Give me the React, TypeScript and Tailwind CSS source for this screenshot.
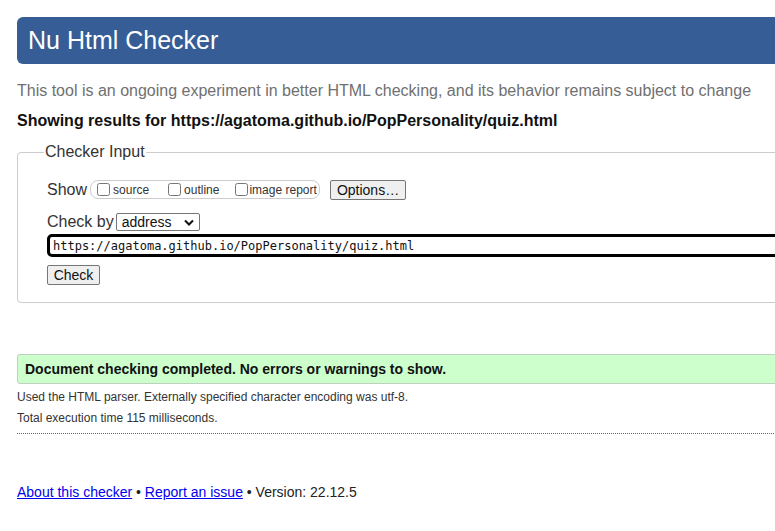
import React from 'react';

export default function App() {
  return (
    <div className="h-[531px] w-[775px] overflow-hidden bg-white font-['Liberation_Sans',Arial,sans-serif] text-[#222]">
      <div className="w-[840px] pl-[17px] pt-[17px]">
        {/* HEADER */}
        <h1 className="h-[47px] bg-[#365d95] rounded-l-[6px] pl-[11px] flex items-center text-white text-[25px] leading-none">
          Nu Html Checker
        </h1>

        <p className="mt-[17px] text-[16px] leading-[20px] text-[#707070] whitespace-nowrap">
          This tool is an ongoing experiment in better HTML checking, and its behavior remains subject to change
        </p>
        <p className="mt-[10px] text-[16px] leading-[20px] font-bold text-[#111] whitespace-nowrap">
          Showing results for https://agatoma.github.io/PopPersonality/quiz.html
        </p>

        {/* CHECKER INPUT */}
        <fieldset className="mt-[12px] border border-[#cccccc] rounded-[4px] h-[160px] pl-[29px] pt-[18px]">
          <legend className="ml-[-3px] px-[1px] text-[16px] leading-[18px] text-[#333]">Checker Input</legend>

          <div className="flex items-center h-[21px]">
            <span className="text-[16px] text-[#333] mr-[3px]">Show</span>
            <div className="flex items-center h-[19px] w-[230px] border border-[#cccccc] rounded-[8px] pl-[6px] text-[12px] text-[#333] whitespace-nowrap">
              <label className="flex items-center">
                <input type="checkbox" className="w-[13px] h-[13px] m-0 mr-[3px]" />
                source
              </label>
              <label className="flex items-center ml-[19px]">
                <input type="checkbox" className="w-[13px] h-[13px] m-0 mr-[3px]" />
                outline
              </label>
              <label className="flex items-center ml-[16px]">
                <input type="checkbox" className="w-[13px] h-[13px] m-0 mr-[1px]" />
                image report
              </label>
            </div>
            <button className="ml-[10px] h-[20px] w-[76px] bg-[#efefef] border border-[#767676] rounded-[2px] text-[14px] text-[#111] leading-none">
              Options…
            </button>
          </div>

          <div className="flex items-center mt-[12px] h-[20px]">
            <span className="text-[16px] text-[#333] mr-[2px]">Check by</span>
            <div className="h-[18px] w-[84px] border border-[#767676] rounded-[2px] flex items-center justify-between pl-[5px] pr-[5px] text-[14px] text-[#111]">
              <span>address</span>
              <svg width="10" height="7" viewBox="0 0 10 7">
                <path d="M1 1.5 L5 5.5 L9 1.5" fill="none" stroke="#111" strokeWidth="2" />
              </svg>
            </div>
          </div>

          <div className="mt-[2px] h-[23px] border-[3px] border-black rounded-[5px] pl-[3px] flex items-center font-['DejaVu_Sans_Mono',monospace] text-[12px] text-[#111] whitespace-nowrap">
            https://agatoma.github.io/PopPersonality/quiz.html
          </div>

          <button className="mt-[8px] h-[20px] w-[53px] bg-[#efefef] border border-[#767676] rounded-[2px] text-[14px] text-[#111] leading-none">
            Check
          </button>
        </fieldset>

        {/* RESULT */}
        <div className="mt-[51px] h-[30px] bg-[#ccffcc] border border-[#c0d0c0] rounded-l-[3px] pl-[7px] flex items-center font-bold text-[14px] text-[#111] whitespace-nowrap">
          Document checking completed. No errors or warnings to show.
        </div>

        <p className="mt-[3px] text-[12px] leading-[20px] text-[#333]">
          Used the HTML parser. Externally specified character encoding was utf-8.
        </p>
        <p className="mt-[1px] text-[12px] leading-[20px] text-[#333]">
          Total execution time 115 milliseconds.
        </p>
        <div className="mt-[5px] border-t border-dotted border-[#666]" />

        {/* FOOTER */}
        <p className="mt-[48px] text-[14px] leading-[20px] text-[#222]">
          <a href="#" className="text-[#0000ee] underline">About this checker</a>
          {' • '}
          <a href="#" className="text-[#0000ee] underline">Report an issue</a>
          {' • Version: 22.12.5'}
        </p>
      </div>
    </div>
  );
}
